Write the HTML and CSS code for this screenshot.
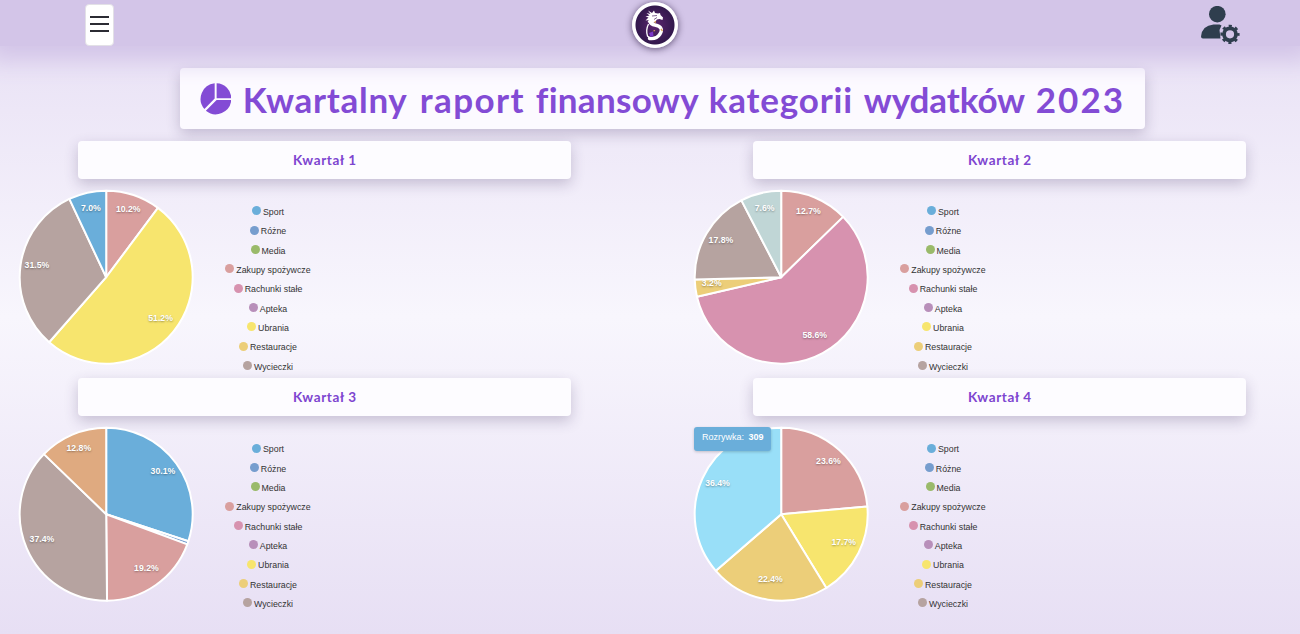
FILE: index.html
```html
<!DOCTYPE html>
<html lang="pl">
<head>
<meta charset="utf-8">
<title>Raport kwartalny</title>
<link rel="stylesheet" href="styles.css">
</head>
<body>
<header class="topbar">
  <button class="menu" aria-label="Menu"><i></i><i></i><i></i></button>
  <div class="logo">
    <svg viewBox="0 0 40 40" width="40" height="40">
      <path fill="#fff" d="M13 5.500L17 8L19 5.500L20 8L23 8.500L25 8L25.500 10L28 12.500L27.500 15L24.500 14L22 14.500L20 17L16.500 19L12.500 17L14 15L10.500 15.500L13.500 12.500L10.500 11.500L14.500 10.500L11.500 8L15.500 9Z"/>
      <path d="M18.500 12C13 16 15 19 20 20C27 21.500 27.500 25 25 29C22.500 33 18 34 14.500 33.500" fill="none" stroke="#fff" stroke-width="3.400" stroke-linecap="round"/>
      <path d="M13.500 19Q10.500 25 12.500 31L15 33" fill="none" stroke="#fff" stroke-width="1.300"/>
      <path d="M14 28L18 26.500L18.500 31L15.500 32Z" fill="#7b35c9"/>
      <path d="M20.500 16L20 18M18.500 26L20 25.500M26 24L27.500 26" stroke="#d9a257" stroke-width="1.300"/>
      <path d="M17 11L22 10.500M19 14.500L22 12.500" stroke="#4b2463" stroke-width=".7"/>
    </svg>
  </div>
  <svg class="user" viewBox="0 0 40 40" width="40" height="40">
    <circle cx="17.300" cy="8.200" r="8.300"/>
    <path d="M13.500 18.500H19.500L21.500 19.500L19.500 24L20.500 32.500H3Q1 32.500 1 30.500Q2 19.500 13.500 18.500Z"/>
    <circle cx="30" cy="28.300" r="6" fill="none" stroke="#2f3e4e" stroke-width="3.800"/>
    <circle cx="30" cy="28.300" r="8.200" fill="none" stroke="#2f3e4e" stroke-width="2.800" stroke-dasharray="3.100 3.340" stroke-dashoffset="1.550"/>
  </svg>
</header>
<main class="page">
  <h1 class="title">
    <svg viewBox="0 0 32 32" width="32" height="32"><path d="M17 0A15.500 15.500 0 0 1 32 15.200H17zM32 17A16 16 0 0 1 6 28L17 17zM15 0V15.400L4.500 26.300A16 16 0 0 1 15 0z"/></svg>
    <span class="w1">Kwartalny</span> <span class="w2">raport</span> <span class="w3">finansowy</span> <span class="w4">kategorii</span> <span class="w5">wydatków</span> <span class="w6">2023</span>
  </h1>
  <div class="grid" id="quarters"></div>
</main>
<script src="charts.js"></script>
</body>
</html>
```

FILE: styles.css
```css
* { box-sizing: border-box; }
body {
  margin: 0;
  height: 634px;
  overflow: hidden;
  background: linear-gradient(#e7dff4 0, #f8f6fd 50%, #e7dff4 100%);
  font-family: "Liberation Sans", Arial, sans-serif;
}
.topbar {
  position: relative;
  z-index: 2;
  height: 46px;
  margin-bottom: 4px;
  display: grid;
  grid-template-columns: 1fr 50px 1fr;
  align-items: start;
  background: #d3c5e8;
  box-shadow: 0 3px 22px 12px #d3c5e8;
}
.menu {
  width: 29px;
  height: 42px;
  margin: 4px 0 0 85px;
  padding: 0 4px 3px;
  display: flex;
  flex-direction: column;
  justify-content: center;
  gap: 5px;
  background: #fff;
  border: 1px solid #e2e0e6;
  border-radius: 4px;
}
.menu i { height: 2px; background: #2b2b33; }
.logo {
  width: 46px;
  height: 46px;
  margin: 2px 0 0 7px;
  padding: 3px;
  background: radial-gradient(circle, #5c2670 0, #32184c 19px, #fff 20px);
  border-radius: 50%;
  box-shadow: 0 1px 7px rgba(30, 15, 50, .65);
}
.logo svg { display: block; }
.user { justify-self: end; margin: 6px 60px 0 0; fill: #2f3e4e; }
.page { width: 1325px; padding-top: 18px; }
.title {
  width: 965px;
  height: 61px;
  margin: 0 auto 12px;
  padding: 0 20px 0 19.500px;
  display: flex;
  align-items: center;
  background: #fcfaff;
  border-radius: 4px;
  color: #834bd5;
  box-shadow: 0 5px 14px rgba(60, 40, 90, .24);
  font: 700 35px Lato, sans-serif;
  white-space: nowrap;
}
.title svg { fill: currentColor; margin: 1px 12px 0 0; }
.title span { flex: none; }
.w1 { width: 177px; letter-spacing: .7px; }
.w2 { width: 116px; letter-spacing: 1.400px; }
.w3 { width: 173px; letter-spacing: .3px; }
.w4 { width: 155px; letter-spacing: .8px; }
.w5 { width: 172px; letter-spacing: -.1px; }
.w6 { letter-spacing: 2px; }
.grid { display: grid; grid-template-columns: 650px 650px; column-gap: 25px; }
.quarter { height: 237.300px; }
.quarter h2 {
  width: 493px;
  height: 38px;
  margin: 0 0 0 78.400px;
  display: flex;
  align-items: center;
  justify-content: center;
  background: #fdfcff;
  border-radius: 4px;
  box-shadow: 0 5px 14px rgba(60, 40, 90, .24);
  color: #7d45d0;
  font: 700 13.500px Lato, sans-serif;
  letter-spacing: .6px;
}
.body { position: relative; display: flex; padding: 10px 0 0 18px; }
.pie { display: block; margin-right: 13.500px; }
.pie path { stroke: #fff; stroke-width: 2; stroke-linejoin: round; }
.pie text {
  fill: #fff;
  font: 700 8.700px "Liberation Sans", sans-serif;
  text-anchor: middle;
  text-shadow: 0 1px 2px rgba(0, 0, 0, .35);
}
.legend {
  width: 121px;
  margin: 13.200px 0 0;
  padding: 0;
  list-style: none;
  font-size: 8.800px;
  color: #333;
}
.legend li { height: 19.350px; display: flex; align-items: center; justify-content: center; gap: 2px; }
.legend i { width: 9px; height: 9px; border-radius: 50%; margin-bottom: 2px; }
.tip {
  position: absolute;
  left: 19px;
  top: 11px;
  width: 77px;
  height: 24px;
  padding-left: 8px;
  border-radius: 3px;
  background: #6aaeda;
  color: #fff;
  font-size: 9px;
  line-height: 20px;
  box-shadow: 0 1px 3px rgba(0, 0, 0, .2);
  white-space: nowrap;
}
.tip b { margin-left: 2px; }
```

FILE: charts.js
```js
const legend = [
  ['Sport', '#6aaeda'], ['Różne', '#769dce'], ['Media', '#9aba6a'],
  ['Zakupy spożywcze', '#d99f9e'], ['Rachunki stałe', '#d792af'],
  ['Apteka', '#b88fba'], ['Ubrania', '#f7e56e'],
  ['Restauracje', '#ecce79'], ['Wycieczki', '#b6a3a0']
];
const quarters = [
  [[10.2, '#d99f9e'], [51.2, '#f7e56e'], [31.5, '#b6a3a0'], [7.0, '#6aaeda']],
  [[12.7, '#d99f9e'], [58.6, '#d792af'], [3.2, '#ecce79'], [17.8, '#b6a3a0'], [7.6, '#c0d6d6']],
  [[30.1, '#6aaeda'], [0.6, '#769dce'], [19.2, '#d99f9e'], [37.4, '#b6a3a0'], [12.8, '#dfaa80']],
  [[23.6, '#d99f9e'], [17.7, '#f7e56e'], [22.4, '#ecce79'], [36.4, '#99dff8']]
];

function pie(slices) {
  const total = slices.reduce((s, d) => s + d[0], 0);
  const at = (t, r, ry = r) => [88.2 + r * Math.sin(t), 88.2 - ry * Math.cos(t)];
  let a = 0, paths = '', labels = '';
  for (const [value, color] of slices) {
    const b = a + value / total * 2 * Math.PI;
    const large = b - a > Math.PI ? 1 : 0;
    paths += `<path fill="${color}" d="M88.2 88.2L${at(a, 86.5)}A86.5 86.5 0 ${large} 1 ${at(b, 86.5)}Z"/>`;
    const [x, y] = at((a + b) / 2, 70, 68.7);
    if (value > 1) labels += `<text x="${x}" y="${y + 0.4}">${value.toFixed(1)}%</text>`;
    a = b;
  }
  return `<svg class="pie" width="176" height="176" viewBox="0 0 176 176">${paths}${labels}</svg>`;
}

document.getElementById('quarters').innerHTML = quarters.map((slices, i) => `
  <section class="quarter">
    <h2>Kwartał ${i + 1}</h2>
    <div class="body">
      ${pie(slices)}
      <ul class="legend">${legend.map(([n, c]) => `<li><i style="background:${c}"></i>${n}</li>`).join('')}</ul>
      ${i === 3 ? '<div class="tip">Rozrywka: <b>309</b></div>' : ''}
    </div>
  </section>`).join('');
```
